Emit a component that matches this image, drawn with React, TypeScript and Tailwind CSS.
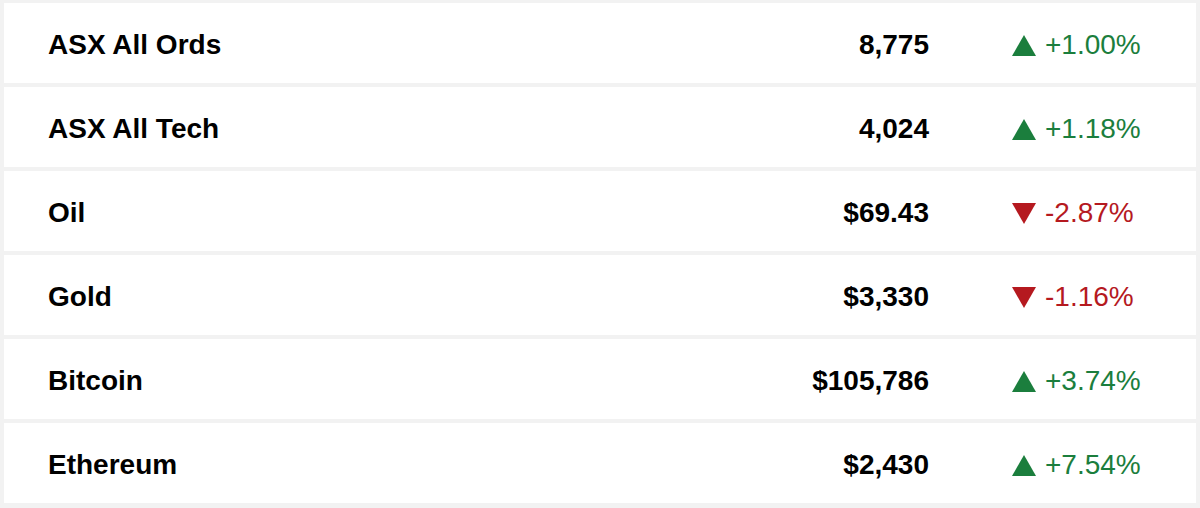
import React from "react";

type Row = { name: string; value: string; change: string; up: boolean };

const rows: Row[] = [
  { name: "ASX All Ords", value: "8,775", change: "+1.00%", up: true },
  { name: "ASX All Tech", value: "4,024", change: "+1.18%", up: true },
  { name: "Oil", value: "$69.43", change: "-2.87%", up: false },
  { name: "Gold", value: "$3,330", change: "-1.16%", up: false },
  { name: "Bitcoin", value: "$105,786", change: "+3.74%", up: true },
  { name: "Ethereum", value: "$2,430", change: "+7.54%", up: true },
];

function Tri({ up }: { up: boolean }) {
  return up ? (
    <svg width="24" height="21" viewBox="0 0 24 21" className="block">
      <polygon points="12,0 24,21 0,21" fill="#1b7e3d" />
    </svg>
  ) : (
    <svg width="24" height="21" viewBox="0 0 24 21" className="block">
      <polygon points="0,0 24,0 12,21" fill="#b5191f" />
    </svg>
  );
}

export default function App() {
  return (
    <div
      className="w-[1200px] h-[508px] bg-[#f2f2f2] pt-[3px] px-[4px] flex flex-col gap-[4px]"
      style={{ fontFamily: '"Liberation Sans", Arial, sans-serif' }}
    >
      {rows.map((r) => (
        <div key={r.name} className="h-[80px] bg-white flex items-center pl-[44px] pt-[4px]">
          <div className="flex-1 text-[28px] font-bold text-black leading-none">{r.name}</div>
          <div className="text-[28px] font-bold text-black leading-none text-right">{r.value}</div>
          <div className="w-[267px] flex items-center pl-[83px]">
            <Tri up={r.up} />
            <span
              className={`ml-[9px] text-[28px] leading-none ${r.up ? "text-[#1b7e3d]" : "text-[#b5191f]"}`}
            >
              {r.change}
            </span>
          </div>
        </div>
      ))}
    </div>
  );
}
